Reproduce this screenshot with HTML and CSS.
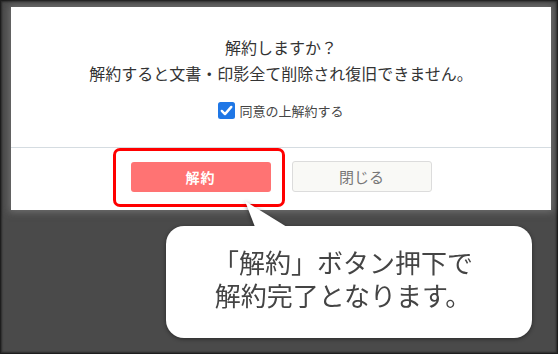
FILE: index.html
```html
<!DOCTYPE html>
<html lang="ja">
<head>
<meta charset="utf-8">
<link rel="stylesheet" href="styles.css">
</head>
<body>
<div class="frame">
  <div class="modal">
    <div class="modal-body">
      <p class="msg">解約しますか？<br>解約すると文書・印影全て削除され復旧できません。</p>
      <label class="agree">
        <span class="check"><svg width="17" height="17" viewBox="0 0 17 17"><rect x="0" y="0" width="17" height="17" rx="2.5" fill="#1f77e6"/><path d="M3.8 8.9 L7 12.1 L13.3 4.9" stroke="#fff" stroke-width="2.4" fill="none" stroke-linecap="round" stroke-linejoin="round"/></svg></span>
        <span class="agree-text">同意の上解約する</span>
      </label>
    </div>
    <div class="modal-footer">
      <button class="btn btn-danger">解約</button>
      <button class="btn btn-close">閉じる</button>
    </div>
  </div>
  <div class="bubble">
    <span class="tail"></span>
    <p class="bubble-text">「解約」ボタン押下で<br>解約完了となります。</p>
  </div>
</div>
</body>
</html>
```
FILE: styles.css
```css
html, body {
  margin: 0;
  padding: 0;
  width: 558px;
  height: 354px;
  overflow: hidden;
  background: #4a4a4a;
}
.frame {
  width: 558px;
  height: 354px;
  box-sizing: border-box;
  border: 1px solid #1e1e1e;
  box-shadow: inset 0 0 2px 1px #2a2a2a;
  padding: 6px 6px 0 10px;
  background: #4a4a4a;
  font-family: "Noto Sans CJK JP", "Noto Sans", sans-serif;
}
.modal {
  width: 540px;
  height: 203px;
  background: #fff;
  display: flex;
  flex-direction: column;
  box-shadow: 0 0 7px 2px rgba(140, 140, 140, 0.55);
}
.modal-body {
  height: 140px;
  box-sizing: border-box;
  padding-top: 27px;
  display: flex;
  flex-direction: column;
  align-items: center;
}
.msg {
  margin: 0;
  font-size: 16px;
  line-height: 26px;
  color: #333;
  text-align: center;
}
.agree {
  margin-top: 16px;
  display: flex;
  align-items: center;
  gap: 4px;
  height: 17px;
}
.check {
  display: block;
  width: 17px;
  height: 17px;
}
.check svg {
  display: block;
}
.agree-text {
  font-size: 13px;
  line-height: 17px;
  color: #444;
}
.modal-footer {
  flex: 1;
  border-top: 1px solid #d5dce1;
  display: flex;
  justify-content: center;
  align-items: flex-start;
  gap: 21px;
  padding-top: 13px;
}
.btn {
  width: 140px;
  height: 31px;
  box-sizing: border-box;
  border-radius: 3px;
  font-family: "Noto Sans CJK JP", "Noto Sans", sans-serif;
  padding: 0;
  margin: 0;
  cursor: pointer;
}
.btn-danger {
  position: relative;
  margin-top: 1px;
  height: 30px;
  background: #ff7373;
  border: none;
  color: #fff;
  font-size: 14px;
  font-weight: 700;
  letter-spacing: 1px;
}
.btn-danger::after {
  content: "";
  position: absolute;
  top: -14px;
  left: -18px;
  right: -14px;
  bottom: -15px;
  border: 3px solid #ff0000;
  border-radius: 7px;
}
.btn-close {
  background: #f9f9f6;
  border: 1px solid #dcdcdc;
  color: #777;
  font-size: 15px;
}
.bubble {
  position: relative;
  margin-top: 16px;
  margin-left: 155px;
  width: 366px;
  height: 112px;
  box-sizing: border-box;
  background: #fff;
  border-radius: 18px;
  padding-top: 19px;
  padding-right: 12px;
  filter: drop-shadow(0 1px 2px rgba(0, 0, 0, 0.45));
}
.tail {
  position: absolute;
  left: 79px;
  top: -25px;
  width: 42px;
  height: 27px;
  background: #fff;
  clip-path: polygon(0 0, 42px 26px, 10px 26px);
}
.bubble-text {
  margin: 0;
  font-size: 26px;
  line-height: 33px;
  color: #444;
  text-align: center;
}
```
